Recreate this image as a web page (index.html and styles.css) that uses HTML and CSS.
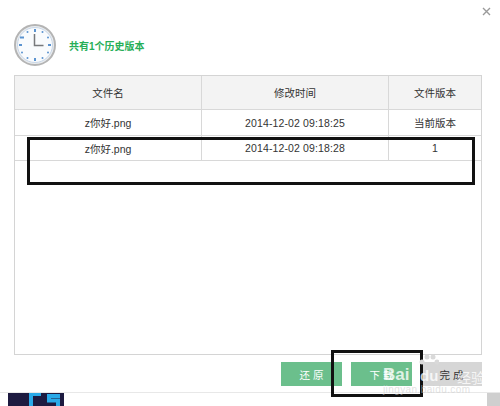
FILE: index.html
```html
<!DOCTYPE html>
<html lang="zh">
<head>
<meta charset="utf-8">
<title>历史版本</title>
<link rel="stylesheet" href="styles.css">
</head>
<body>
<div class="dialog">
  <div class="close"><svg width="9" height="9" viewBox="0 0 9 9"><path d="M1 1L8 8M8 1L1 8" stroke="#9a9a9a" stroke-width="1.4" fill="none"/></svg></div>
  <div class="head">
    <svg class="clock" width="42" height="42" viewBox="0 0 42 42">
      <circle cx="21" cy="21" r="20" fill="#e9ecef" stroke="#b4b4b4" stroke-width="2"/>
      <circle cx="21" cy="21" r="17.5" fill="#f9fbfd" stroke="#c9d6e6" stroke-width="1"/>
      <g fill="#5b93d0">
        <rect x="20" y="5" width="2" height="3"/><rect x="20" y="34" width="2" height="3"/>
        <rect x="5" y="20" width="3" height="2"/><rect x="34" y="20" width="3" height="2"/>
        <circle cx="28.5" cy="8" r="1"/><circle cx="34" cy="13.500" r="1"/><circle cx="34" cy="28.500" r="1"/><circle cx="28.500" cy="34" r="1"/>
        <circle cx="13.500" cy="34" r="1"/><circle cx="8" cy="28.500" r="1"/><rect x="6" y="12.500" width="4" height="2"/><circle cx="13.500" cy="8" r="1"/>
      </g>
      <path d="M20.500 10V21.500H29.500" stroke="#77797c" stroke-width="1.500" fill="none"/>
    </svg>
    <span class="title">共有1个历史版本</span>
  </div>
  <div class="panel">
    <div class="row row-head">
      <div class="cell c1">文件名</div>
      <div class="cell c2">修改时间</div>
      <div class="cell c3">文件版本</div>
    </div>
    <div class="row">
      <div class="cell c1">z你好.png</div>
      <div class="cell c2 stamp">2014-12-02 09:18:25</div>
      <div class="cell c3">当前版本</div>
    </div>
    <div class="row">
      <div class="cell c1">z你好.png</div>
      <div class="cell c2 stamp">2014-12-02 09:18:28</div>
      <div class="cell c3">1</div>
    </div>
  </div>
  <div class="actions">
    <div class="btn green">还原</div>
    <div class="btn green">下载</div>
    <div class="btn grey">完成</div>
  </div>
</div>
<div class="below">
  <div class="logo"><svg width="56" height="13" viewBox="0 0 56 13"><path d="M23 13V1H33M52 3H41V7.500H50V13" stroke="#29a9e8" stroke-width="4" fill="none"/></svg></div>
  <div class="scroll"></div>
</div>
<div class="mark mark-row"></div>
<div class="mark mark-btn"></div>
<div class="watermark"><span class="wm-a">Bai</span><svg class="paw" width="20" height="16" viewBox="0 0 20 16"><g fill="#d9d9d9"><circle cx="3" cy="10" r="2.500"/><circle cx="8" cy="5" r="2.500"/><circle cx="14" cy="5" r="2.500"/><circle cx="18" cy="10" r="2.500"/></g></svg><span class="wm-b">du</span><span class="wm-c">经验</span><span class="wm-d">jingyan.baidu.com</span></div>
</body>
</html>
```
FILE: styles.css
```css
html, body {
  margin: 0;
  padding: 0;
  width: 500px;
  height: 406px;
  overflow: hidden;
  background: #fff;
  font-family: "Liberation Sans", "Noto Sans CJK SC", sans-serif;
}
.dialog {
  height: 393px;
  box-sizing: border-box;
  padding: 7px 18px 0 14px;
  border-bottom: 1px solid #e8e8e8;
  display: flex;
  flex-direction: column;
}
.close {
  align-self: flex-end;
  height: 9px;
  margin-right: -9px;
  line-height: 0;
}
.head {
  display: flex;
  align-items: center;
  gap: 13px;
  height: 42px;
  margin-top: 8px;
}
.clock {
  flex: none;
}
.title {
  font-size: 10px;
  font-weight: bold;
  color: #27ae57;
}
.panel {
  margin-top: 9px;
  height: 280px;
  box-sizing: border-box;
  border: 1px solid #d4d4d4;
}
.row {
  display: flex;
  height: 26px;
  border-bottom: 1px solid #d8d8d8;
  box-sizing: border-box;
}
.row + .row + .row {
  height: 25px;
}
.row-head {
  height: 34px;
  background: #f3f3f3;
}
.cell {
  display: flex;
  align-items: center;
  justify-content: center;
  font-size: 10.500px;
  color: #333;
  box-sizing: border-box;
}
.stamp {
  letter-spacing: .12px;
}
.c1 {
  width: 187px;
  border-right: 1px solid #d8d8d8;
}
.c2 {
  width: 187px;
  border-right: 1px solid #d8d8d8;
}
.c3 {
  flex: 1;
}
.actions {
  display: flex;
  justify-content: flex-end;
  gap: 9px;
  margin-top: 7px;
}
.btn {
  width: 61px;
  height: 24px;
  box-sizing: border-box;
  padding-left: 3px;
  display: flex;
  align-items: center;
  justify-content: center;
  font-size: 10.500px;
  letter-spacing: 3px;
}
.green {
  background: #6bbf8c;
  color: #fff;
}
.grey {
  background: #d6d6d6;
  color: #333;
}
.below {
  height: 13px;
  display: flex;
  justify-content: space-between;
  padding-left: 8px;
}
.logo {
  width: 56px;
  height: 13px;
  background: #1d1a40;
  line-height: 0;
}
.scroll {
  width: 13px;
  height: 13px;
  background: #cfcfcf;
}
.mark {
  position: absolute;
  box-sizing: border-box;
  border: 3px solid #111;
}
.mark-row {
  left: 27px;
  top: 137px;
  width: 448px;
  height: 48px;
}
.mark-btn {
  left: 331px;
  top: 350px;
  width: 92px;
  height: 47px;
}
.watermark {
  position: absolute;
  left: 380px;
  top: 352px;
  width: 115px;
  height: 50px;
  color: rgba(255, 255, 255, .78);
  font-weight: bold;
}
.wm-a {
  position: absolute;
  left: 3px;
  top: 13px;
  font-size: 17px;
}
.wm-b {
  position: absolute;
  left: 40px;
  top: 15px;
  font-size: 15px;
}
.paw {
  position: absolute;
  left: 39px;
  top: 0;
}
.wm-c {
  position: absolute;
  left: 77px;
  top: 15px;
  font-size: 14px;
  font-weight: normal;
}
.wm-d {
  position: absolute;
  left: 3px;
  top: 32px;
  font-size: 10px;
  font-weight: normal;
  color: rgba(205, 205, 205, .6);
  letter-spacing: .4px;
}
```
